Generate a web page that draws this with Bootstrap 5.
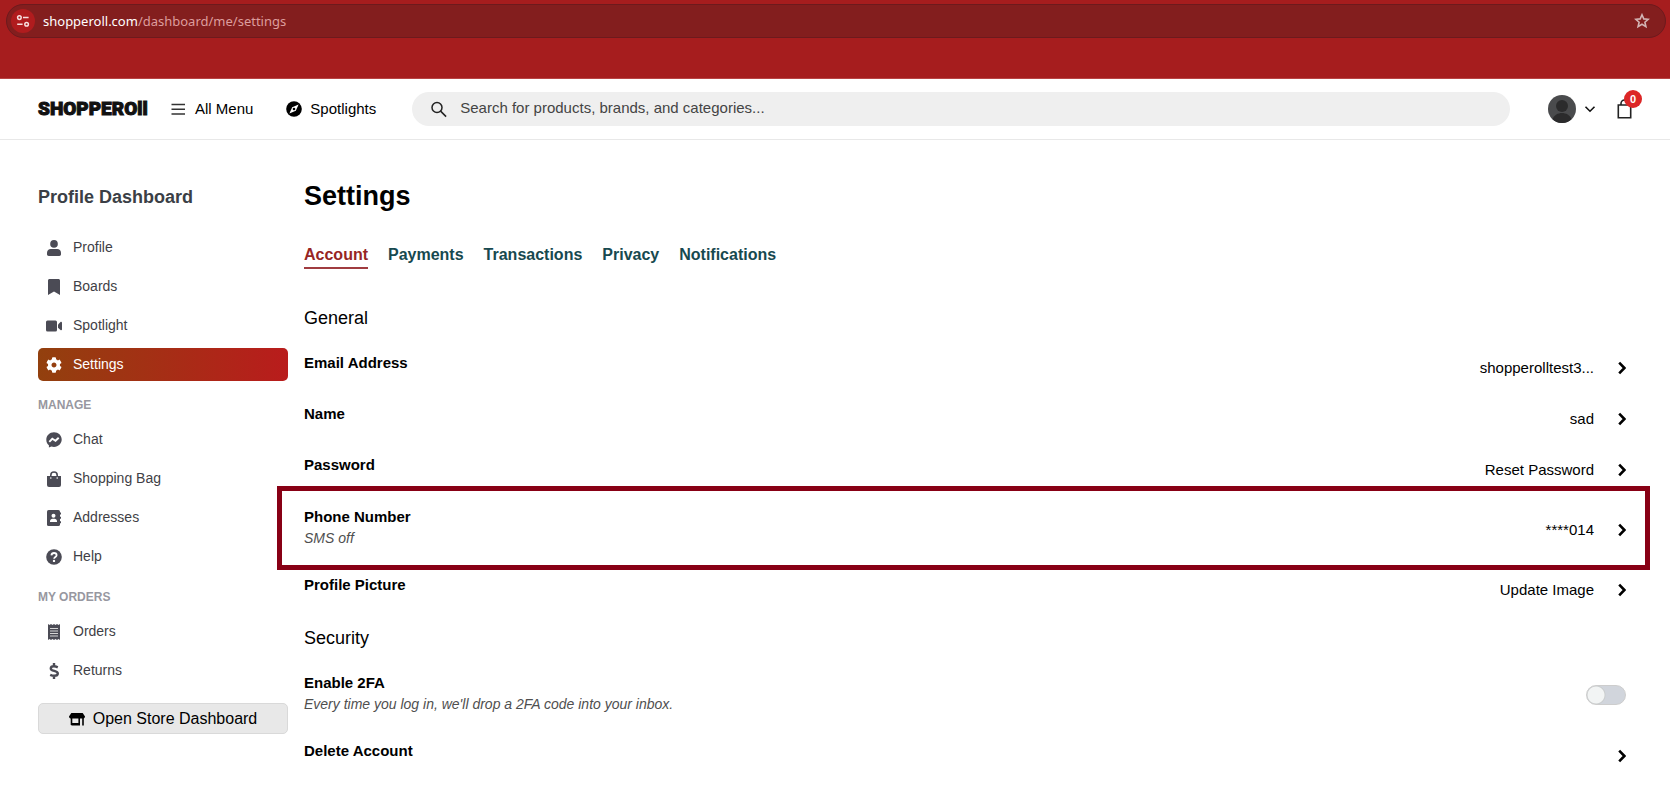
<!DOCTYPE html>
<html lang="en">
<head>
<meta charset="utf-8">
<meta name="viewport" content="width=device-width, initial-scale=1">
<title>Settings - Shopperoll</title>
<link href="https://cdn.jsdelivr.net/npm/bootstrap@5.3.0/dist/css/bootstrap.min.css" rel="stylesheet">
<style>
  body { font-family: "Liberation Sans", Arial, sans-serif; font-size: 15px; line-height: 22px; color: #000; background: #fff; }
  svg { display: block; flex: none; }
  a { color: inherit; text-decoration: none; }
  button { color: inherit; background: none; border: 0; padding: 0; }

  /* browser strip */
  .browser-strip { background: #a61d1e; border-bottom: 1px solid #b84444; height: 79px; padding: 4px 4px 0 6px; }
  .address-pill { height: 34px; border-radius: 17px; background: #831e1e; border: 1px solid #6d1a1d; padding: 0 15px 0 4px; font: 13px/20px "Noto Sans", "Open Sans", sans-serif; color: #dd9d9d; }
  .site-info { width: 24px; height: 24px; border-radius: 50%; background: #b01c1e; margin-right: 8px; }
  .address-pill b { font-weight: 400; color: #fff; }

  /* site header */
  .site-header { height: 61px; border-bottom: 1px solid #e8e8e8; padding: 0 38px 0 38px; }
  .logo-word { font: 900 19px/24px Roboto, "Liberation Sans", sans-serif; color: #111; -webkit-text-stroke: 1px #111; width: 110px; flex: none; margin-right: 23px; white-space: nowrap; }
  .menu-button { gap: 9px; margin-right: 33px; }
  .spot-link { gap: 8px; margin-right: 36px; }
  .search-pill { height: 34px; border-radius: 17px; background: #efefef; padding: 0 18px; gap: 13px; margin-right: 38px; }
  .search-pill input { background: none; border: 0; outline: 0; padding: 0 0 2px; color: #333; }
  .search-pill input::placeholder { color: #444; opacity: 1; }
  .account-button { gap: 8px; margin-right: 21px; }
  .bag-count { width: 18px; height: 18px; border-radius: 50%; background: #dc2626; color: #fff; font: bold 11px/18px "Liberation Sans", sans-serif; top: -9px; left: 7px; }

  /* page */
  .page-body { padding: 38px 44px 0 38px; gap: 16px; }
  .side-bar { width: 250px; flex: none; padding-top: 7px; color: #3f3f46; }
  .side-title { font-size: 18px; line-height: 24px; font-weight: 700; margin: 0 0 22px; color: #3b3f46; }
  .side-link { height: 33px; border-radius: 5px; margin-bottom: 6px; padding: 0 8px 2px; gap: 11px; font-size: 14px; line-height: 20px; }
  .side-link svg { color: #4b4b55; position: relative; top: 1px; }
  .side-link.active { background: linear-gradient(90deg, #92400e, #b91c1c); color: #fff; }
  .side-link.active svg { color: #fff; }
  .side-group { font-size: 12px; line-height: 18px; font-weight: 700; margin: 15px 0 9px; color: #9797a0; }
  .store-button { height: 31px; border: 1px solid #d9d9d9; border-radius: 5px; background: #e8e8e8; font-size: 16px; gap: 8px; margin-top: 16px; color: #000; }

  .page-title { font-size: 27px; line-height: 36px; font-weight: 700; margin: 0 0 29px; }
  .tab-row { gap: 20px; font-size: 16px; line-height: 24px; font-weight: 700; color: #17494f; margin-bottom: 37px; }
  .tab-row a { border-bottom: 2px solid transparent; }
  .tab-row a.active { color: #972524; border-color: #a03c40; }
  .group-title { font-size: 18px; line-height: 24px; font-weight: 400; margin: 11px 0 12px; }
  .setting-row { padding: 10px 0; }
  .setting-text { min-height: 31px; }
  .setting-text.with-note { padding-bottom: 6px; }
  .setting-name { display: block; font-weight: 700; }
  .setting-note { display: block; font-size: 14px; line-height: 20px; font-style: italic; color: #4f4f4f; }
  .setting-value { gap: 24px; }
  .marked { margin-top: 1px; }
  .marked::after { content: ""; position: absolute; inset: -10px -24px -6px -27px; border: 5px solid #880015; pointer-events: none; }
  .toggle { appearance: none; width: 40px; height: 20px; margin: 0 0 3px; border: 1px solid #cdcdcd; border-radius: 10px; background: radial-gradient(circle at 9px 9px, #f2f4f4 8px, #c9cccd 9px, #d1d5dc 10px); }
</style>
</head>
<body>
<div class="browser-strip">
  <div class="address-pill d-flex align-items-center">
    <button class="site-info d-flex align-items-center justify-content-center" aria-label="View site information">
      <svg width="14" height="14" viewBox="0 0 14 14" fill="none" stroke="#f6dede" stroke-width="1.5"><circle cx="3.4" cy="3.6" r="1.8"/><path d="M7 3.6h5.6M1.2 10.2h5.4"/><circle cx="10.6" cy="10.2" r="1.8"/></svg>
    </button>
    <span class="flex-grow-1"><b>shopperoll.com</b>/dashboard/me/settings</span>
    <button aria-label="Bookmark this page">
      <svg width="16" height="16" viewBox="0 0 16 16" fill="none" stroke="#d3b5b5" stroke-width="1.6"><path d="M8 1.8l1.8 4.1 4.4.4-3.3 2.9 1 4.4L8 11.3l-3.9 2.3 1-4.4L1.800 6.300l4.400-.4z"/></svg>
    </button>
  </div>
</div>

<header class="site-header d-flex align-items-center">
  <a class="logo-word" href="#">SHOPPEROll</a>
  <button class="menu-button d-flex align-items-center text-nowrap">
    <svg width="15" height="14" viewBox="0 0 15 14" stroke="#333" stroke-width="1.4"><path d="M.5 2.500h13.500M.5 7.300h13.500M.5 12h13.500"/></svg>All Menu
  </button>
  <a class="spot-link d-flex align-items-center" href="#">
    <svg width="16" height="16" viewBox="0 0 16 16"><circle cx="8" cy="8" r="7.800"/><path d="M12.600 3.400L9.800 9.700 3.400 12.600 6.200 6.200z" fill="#fff"/><circle cx="8" cy="8" r="1.300"/></svg>Spotlights
  </a>
  <label class="search-pill d-flex align-items-center flex-grow-1">
    <svg width="17" height="17" viewBox="0 0 17 17" fill="none" stroke="#222" stroke-width="1.500"><circle cx="7" cy="6.500" r="5"/><path d="M10.600 10.100l5.500 5.500"/></svg>
    <input class="flex-grow-1" type="text" aria-label="Search" placeholder="Search for products, brands, and categories...">
  </label>
  <button class="account-button d-flex align-items-center" aria-label="Account menu">
    <svg width="28" height="28" viewBox="0 0 28 28"><circle cx="14" cy="14" r="14" fill="#4a4b4d"/><circle cx="14" cy="11" r="6" fill="#2b2b2c"/><path d="M4.500 24.300C6 20 10 18 14 18s8 2 9.500 6.300A14 14 0 0 1 4.500 24.300z" fill="#2b2b2c"/></svg>
    <svg width="12" height="12" viewBox="0 0 12 12" fill="none" stroke="#111" stroke-width="1.600"><path d="M1.500 3.700L6 8.200l4.500-4.500"/></svg>
  </button>
  <a class="position-relative" href="#" aria-label="Shopping bag">
    <svg width="15" height="20" viewBox="0 0 15 20" fill="none" stroke="#222" stroke-width="1.600"><path d="M1.300 6h12.400v12.700H1.300zM4 6V4.500a3.500 3.500 0 0 1 7 0V6"/></svg>
    <span class="bag-count position-absolute text-center">0</span>
  </a>
</header>

<div class="page-body d-flex">
  <aside class="side-bar">
    <h2 class="side-title">Profile Dashboard</h2>
    <nav>
      <a class="side-link d-flex align-items-center" href="#"><svg width="16" height="16" viewBox="-32 0 512 512" fill="currentColor"><circle cx="224" cy="124" r="122"/><path d="M120 288h208c66 0 120 54 120 120v50c0 30-24 54-54 54H54c-30 0-54-24-54-54v-50c0-66 54-120 120-120z"/></svg>Profile</a>
      <a class="side-link d-flex align-items-center" href="#"><svg width="16" height="16" viewBox="-64 0 512 512" fill="currentColor"><path d="M0 512V48C0 21.490 21.490 0 48 0h288c26.510 0 48 21.490 48 48v464L192 400 0 512z"/></svg>Boards</a>
      <a class="side-link d-flex align-items-center" href="#"><svg width="16" height="16" viewBox="0 0 16 16" fill="currentColor"><rect x="0" y="2.600" width="11" height="11" rx="1.500"/><path d="M12 6.500l2.500-2.400c.6-.5 1.500-.2 1.500.6v6.800c0 .8-.9 1.100-1.500.6L12 9.700z"/></svg>Spotlight</a>
      <a class="side-link active d-flex align-items-center" href="#" aria-current="page"><svg width="16" height="16" viewBox="0 0 512 512" fill="currentColor"><path d="M487.4 315.7l-42.6-24.6c4.3-23.2 4.3-47 0-70.2l42.6-24.6c4.9-2.8 7.1-8.6 5.5-14-11.1-35.6-30-67.8-54.7-94.6-3.8-4.1-10-5.1-14.8-2.3L380.8 110c-17.9-15.4-38.5-27.3-60.8-35.100V25.800c0-5.600-3.900-10.500-9.400-11.700-36.700-8.200-74.300-7.800-109.200 0-5.500 1.200-9.400 6.100-9.400 11.700V75c-22.200 7.900-42.800 19.800-60.800 35.100L88.700 85.500c-4.900-2.800-11-1.900-14.800 2.300-24.700 26.700-43.600 58.900-54.700 94.600-1.700 5.400.6 11.200 5.500 14L67.300 221c-4.300 23.200-4.300 47 0 70.200l-42.600 24.600c-4.900 2.800-7.100 8.600-5.500 14 11.100 35.600 30 67.800 54.700 94.600 3.800 4.100 10 5.100 14.800 2.300l42.600-24.600c17.900 15.400 38.500 27.300 60.800 35.100v49.200c0 5.600 3.900 10.500 9.400 11.700 36.700 8.200 74.300 7.800 109.200 0 5.500-1.200 9.400-6.100 9.400-11.700v-49.200c22.200-7.900 42.800-19.800 60.800-35.100l42.600 24.600c4.900 2.800 11 1.900 14.800-2.300 24.700-26.700 43.600-58.900 54.700-94.600 1.500-5.500-.7-11.300-5.600-14.100zM256 336c-44.100 0-80-35.900-80-80s35.900-80 80-80 80 35.900 80 80-35.900 80-80 80z"/></svg>Settings</a>
    </nav>
    <h3 class="side-group">MANAGE</h3>
    <nav>
      <a class="side-link d-flex align-items-center" href="#"><svg width="16" height="16" viewBox="0 0 16 16" fill="none"><path d="M8 .3C3.600.3.300 3.500.300 7.700c0 2.300 1 4.200 2.600 5.500v2.300l2.500-1c.8.200 1.700.4 2.600.4 4.400 0 7.700-3.200 7.700-7.300S12.400.3 8 .3z" fill="currentColor"/><path d="M3.300 9.900L6.300 6.800l3.200 2 3.200-3.100" stroke="#fff" stroke-width="1.900"/></svg>Chat</a>
      <a class="side-link d-flex align-items-center" href="#"><svg width="16" height="16" viewBox="0 0 16 16" fill="none"><path d="M1 5h14v9a2 2 0 0 1-2 2H3a2 2 0 0 1-2-2z" fill="currentColor"/><path d="M4.800 6V4.200a3.200 3.200 0 0 1 6.400 0V6" stroke="currentColor" stroke-width="1.600"/><circle cx="4.800" cy="7" r=".8" fill="#fff"/><circle cx="11.200" cy="7" r=".8" fill="#fff"/></svg>Shopping Bag</a>
      <a class="side-link d-flex align-items-center" href="#"><svg width="16" height="16" viewBox="0 0 16 16" fill="currentColor"><rect x="1" y="0" width="13" height="16" rx="1.600"/><path d="M14 2.500h1v2h-1zM14 6.800h1v2h-1zM14 11.200h1v2h-1z"/><circle cx="7.500" cy="5.800" r="2" fill="#fff"/><path d="M4 12v-.8c0-1.500 1.200-2.500 2.500-2.500h2c1.300 0 2.500 1 2.500 2.500v.8z" fill="#fff"/></svg>Addresses</a>
      <a class="side-link d-flex align-items-center" href="#"><svg width="16" height="16" viewBox="0 0 16 16" fill="none"><circle cx="8" cy="8" r="7.800" fill="currentColor"/><path d="M5.400 6.300C5.600 4.700 6.600 4 8 4c1.500 0 2.600.9 2.600 2.200C10.600 7.900 8.200 8 8.100 9.700" stroke="#fff" stroke-width="1.800"/><circle cx="8" cy="11.900" r="1.200" fill="#fff"/></svg>Help</a>
    </nav>
    <h3 class="side-group">MY ORDERS</h3>
    <nav>
      <a class="side-link d-flex align-items-center" href="#"><svg width="16" height="16" viewBox="0 0 16 16" fill="none"><path d="M2 0l1.500 1L5 0l1.500 1L8 0l1.500 1L11 0l1.500 1L14 0v16l-1.500-1-1.500 1-1.500-1L8 16l-1.500-1L5 16l-1.500-1L2 16z" fill="currentColor"/><path d="M4 4.500h8M4 7h8M4 9.500h8M4 12h8" stroke="#d5d5d5" stroke-width="1.200"/></svg>Orders</a>
      <a class="side-link d-flex align-items-center" href="#"><svg width="16" height="16" viewBox="0 0 16 16" fill="none" stroke="currentColor" stroke-width="2.400"><path d="M8 0v3M8 13v3M11.800 4.300C10.500 3.700 9.300 3.300 7.900 3.300 6.100 3.300 4.800 4.100 4.800 5.500c0 3.300 7 1.600 7 5 0 1.500-1.500 2.300-3.600 2.300-1.500 0-2.700-.4-4-1"/></svg>Returns</a>
    </nav>
    <button class="store-button d-flex align-items-center justify-content-center w-100">
      <svg width="16" height="16" viewBox="0 0 16 16"><path d="M2.300 2h11.400L16 5.600C16 6.600 15.300 7.500 14.300 7.500H1.700C.7 7.500 0 6.600 0 5.600z"/><path d="M2.500 7v6.200h7.700V7M14 7v7.500" fill="none" stroke="#000" stroke-width="1.600"/><path d="M2 12h9v2.500H3a1 1 0 0 1-1-1z"/></svg>Open Store Dashboard
    </button>
  </aside>

  <main class="flex-grow-1">
    <h1 class="page-title">Settings</h1>
    <nav class="tab-row d-flex">
      <a class="active" href="#" aria-current="page">Account</a>
      <a href="#">Payments</a>
      <a href="#">Transactions</a>
      <a href="#">Privacy</a>
      <a href="#">Notifications</a>
    </nav>

    <h2 class="group-title">General</h2>
    <a class="setting-row d-flex justify-content-between" href="#">
      <span class="setting-text"><span class="setting-name">Email Address</span></span>
      <span class="setting-value d-flex align-items-center">shopperolltest3... <svg width="8" height="14" viewBox="0 0 8 14" fill="none" stroke="#000" stroke-width="2.600"><path d="M1.200 1.700L6.400 7 1.200 12.300"/></svg></span>
    </a>
    <a class="setting-row d-flex justify-content-between" href="#">
      <span class="setting-text"><span class="setting-name">Name</span></span>
      <span class="setting-value d-flex align-items-center">sad <svg width="8" height="14" viewBox="0 0 8 14" fill="none" stroke="#000" stroke-width="2.600"><path d="M1.200 1.700L6.400 7 1.200 12.300"/></svg></span>
    </a>
    <a class="setting-row d-flex justify-content-between" href="#">
      <span class="setting-text"><span class="setting-name">Password</span></span>
      <span class="setting-value d-flex align-items-center">Reset Password <svg width="8" height="14" viewBox="0 0 8 14" fill="none" stroke="#000" stroke-width="2.600"><path d="M1.200 1.700L6.400 7 1.200 12.300"/></svg></span>
    </a>
    <a class="setting-row marked position-relative d-flex justify-content-between" href="#">
      <span class="setting-text with-note"><span class="setting-name">Phone Number</span><span class="setting-note">SMS off</span></span>
      <span class="setting-value d-flex align-items-center">****014 <svg width="8" height="14" viewBox="0 0 8 14" fill="none" stroke="#000" stroke-width="2.600"><path d="M1.200 1.700L6.400 7 1.200 12.300"/></svg></span>
    </a>
    <a class="setting-row d-flex justify-content-between" href="#">
      <span class="setting-text"><span class="setting-name">Profile Picture</span></span>
      <span class="setting-value d-flex align-items-center">Update Image <svg width="8" height="14" viewBox="0 0 8 14" fill="none" stroke="#000" stroke-width="2.600"><path d="M1.200 1.700L6.400 7 1.200 12.300"/></svg></span>
    </a>

    <h2 class="group-title">Security</h2>
    <div class="setting-row d-flex justify-content-between">
      <label class="setting-text with-note" for="twofa"><span class="setting-name">Enable 2FA</span><span class="setting-note">Every time you log in, we'll drop a 2FA code into your inbox.</span></label>
      <span class="setting-value d-flex align-items-center"><input class="toggle" type="checkbox" role="switch" id="twofa"></span>
    </div>
    <a class="setting-row d-flex justify-content-between" href="#" aria-label="Delete Account">
      <span class="setting-text"><span class="setting-name">Delete Account</span></span>
      <span class="setting-value d-flex align-items-center"><svg width="8" height="14" viewBox="0 0 8 14" fill="none" stroke="#000" stroke-width="2.600"><path d="M1.200 1.700L6.400 7 1.200 12.300"/></svg></span>
    </a>
  </main>
</div>
<script src="https://cdn.jsdelivr.net/npm/bootstrap@5.3.0/dist/js/bootstrap.bundle.min.js"></script>
</body>
</html>
